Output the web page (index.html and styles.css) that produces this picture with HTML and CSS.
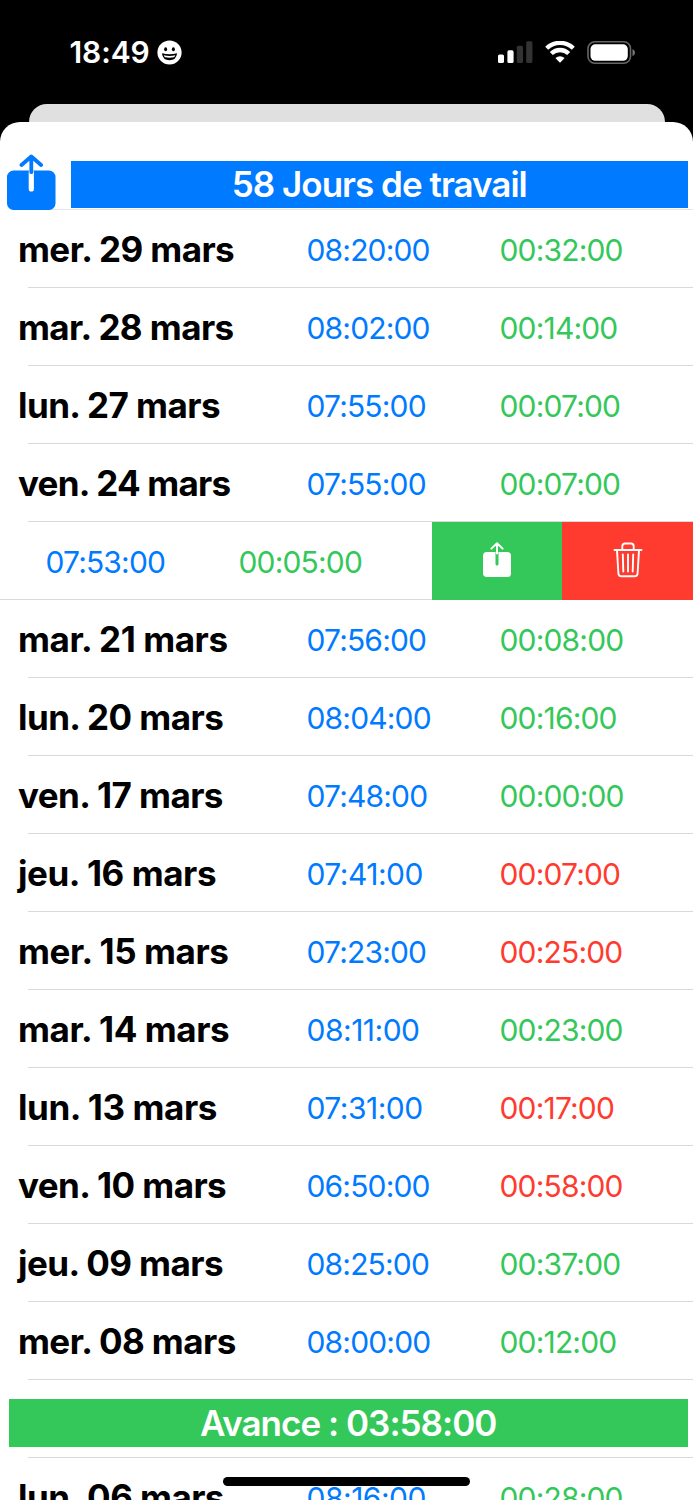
FILE: index.html
```html
<!DOCTYPE html>
<html lang="fr">
<head>
<meta charset="utf-8">
<title>Jours de travail</title>
<link rel="stylesheet" href="styles.css">
</head>
<body>
<div class="phone">
  <header class="status">
    <span class="clock">18:49</span>
    <svg class="smiley" width="25" height="25" viewBox="0 0 25 25"><circle cx="12.5" cy="12.5" r="12.1" fill="#fff"/><ellipse cx="8.6" cy="9.3" rx="1.5" ry="2" fill="#000"/><ellipse cx="16.4" cy="9.3" rx="1.5" ry="2" fill="#000"/><path d="M4.9 13.3Q12.5 15.3 20.1 13.3Q19.200 20.300 12.500 20.300Q5.800 20.300 4.900 13.300Z" fill="#000"/><path d="M6.700 15.300Q12.500 16.600 18.300 15.300Q17.900 16.700 16.800 17.300Q12.500 18.200 8.200 17.300Q7.100 16.700 6.700 15.300Z" fill="#fff"/></svg>
    <div class="indicators">
      <svg width="35" height="23" viewBox="0 0 35 23"><g fill="#fff"><rect x="0" y="13.500" width="6" height="8.500" rx="1.600"/><rect x="9.400" y="9.300" width="6.200" height="12.700" rx="1.600"/></g><g fill="#333"><rect x="18.800" y="4.700" width="6.200" height="17.300" rx="1.600"/><rect x="28.200" y="0.200" width="6.200" height="21.800" rx="1.600"/></g></svg>
      <svg width="30" height="23" viewBox="0 0 30 23"><g fill="none" stroke="#fff" stroke-width="4.300"><path d="M1.700 7.200A19.200 19.200 0 0 1 28.300 7.200"/><path d="M6.300 12.600A12.300 12.300 0 0 1 23.700 12.600"/></g><path d="M10.400 17Q15 13.400 19.600 17L15.600 21.300Q15 21.900 14.400 21.300Z" fill="#fff"/></svg>
      <svg width="49" height="23" viewBox="0 0 49 23"><rect x="1" y="0.800" width="42.500" height="21.400" rx="6.800" fill="none" stroke="#666" stroke-width="1.600"/><rect x="3.500" y="3.300" width="37.300" height="16.500" rx="4.800" fill="#fff"/><path d="M45.500 8V15Q48 14 48 11.500Q48 9 45.500 8Z" fill="#777"/></svg>
    </div>
  </header>
  <div class="back-sheet"></div>
  <main class="sheet">
    <div class="heading">
      <svg class="share" width="49" height="57" viewBox="0 0 49 57"><rect x="0" y="16.500" width="48.500" height="39.500" rx="6.500" fill="#007aff"/><path d="M24.300 18V35" stroke="#fff" stroke-width="5.200" stroke-linecap="round"/><path d="M24.300 18.200V3M14.500 11L24.300 2.500L34.100 11" fill="none" stroke="#007aff" stroke-width="3.800" stroke-linecap="round" stroke-linejoin="round"/></svg>
      <h1 class="title">58 Jours de travail</h1>
    </div>
    <div class="list">
      <div class="row"><b>mer. 29 mars</b><span class="worked">08:20:00</span><span class="plus">00:32:00</span></div>
      <div class="row"><b>mar. 28 mars</b><span class="worked">08:02:00</span><span class="plus">00:14:00</span></div>
      <div class="row"><b>lun. 27 mars</b><span class="worked">07:55:00</span><span class="plus">00:07:00</span></div>
      <div class="row"><b class="tight">ven. 24 mars</b><span class="worked">07:55:00</span><span class="plus">00:07:00</span></div>
      <div class="row swiped">
        <span class="worked">07:53:00</span><span class="plus">00:05:00</span>
        <div class="action send"><svg width="28" height="35" viewBox="0 0 28 35"><rect x="0" y="10" width="28" height="25" rx="3.800" fill="#fff"/><path d="M14 11V22" stroke="#34c759" stroke-width="3" stroke-linecap="round"/><path d="M14 11.500V1.500M8.400 6.600L14 1.200L19.600 6.600" fill="none" stroke="#fff" stroke-width="2" stroke-linecap="round" stroke-linejoin="round"/></svg></div>
        <div class="action delete"><svg width="30" height="36" viewBox="0 0 30 36"><g fill="none" stroke="#fff" stroke-width="1.900" stroke-linecap="round" stroke-linejoin="round"><path d="M1.500 8H28.500M9.300 8V4.300Q9.300 1.500 12 1.500H18Q20.700 1.500 20.700 4.300V8M4 8L5.400 31.500Q5.600 34.300 8.400 34.300H21.600Q24.400 34.300 24.600 31.500L26 8M9.800 12.500L10.300 29.500M15 12.500V29.500M20.200 12.500L19.700 29.500"/></g></svg></div>
      </div>
      <div class="row"><b class="wide">mar. 21 mars</b><span class="worked">07:56:00</span><span class="plus">00:08:00</span></div>
      <div class="row"><b>lun. 20 mars</b><span class="worked">08:04:00</span><span class="plus">00:16:00</span></div>
      <div class="row"><b>ven. 17 mars</b><span class="worked">07:48:00</span><span class="plus">00:00:00</span></div>
      <div class="row"><b class="wide">jeu. 16 mars</b><span class="worked loose">07:41:00</span><span class="minus">00:07:00</span></div>
      <div class="row"><b class="wide">mer. 15 mars</b><span class="worked">07:23:00</span><span class="minus">00:25:00</span></div>
      <div class="row"><b class="wide">mar. 14 mars</b><span class="worked loose">08:11:00</span><span class="plus">00:23:00</span></div>
      <div class="row"><b class="wide">lun. 13 mars</b><span class="worked loose">07:31:00</span><span class="minus">00:17:00</span></div>
      <div class="row"><b>ven. 10 mars</b><span class="worked">06:50:00</span><span class="minus">00:58:00</span></div>
      <div class="row"><b>jeu. 09 mars</b><span class="worked">08:25:00</span><span class="plus">00:37:00</span></div>
      <div class="row"><b>mer. 08 mars</b><span class="worked">08:00:00</span><span class="plus">00:12:00</span></div>
      <div class="row summary"><strong class="balance">Avance : 03:58:00</strong></div>
      <div class="row"><b>lun. 06 mars</b><span class="worked loose">08:16:00</span><span class="plus">00:28:00</span></div>
    </div>
  </main>
  <div class="home-bar"></div>
</div>
</body>
</html>
```
FILE: styles.css
```css
* { box-sizing: border-box; }
body { margin: 0; background: #000; font-family: Inter, "Liberation Sans", sans-serif; }
.phone { position: relative; width: 693px; height: 1500px; overflow: hidden; background: #000; display: flex; flex-direction: column; }
svg { display: block; flex: none; }

.status { height: 104px; flex: none; display: flex; align-items: center; padding: 0 57.500px 0 69.500px; }
.clock { color: #fff; font-size: 30px; font-weight: 600; width: 87px; letter-spacing: -0.1px; }
.indicators { margin-left: auto; display: flex; gap: 12px; align-items: center; }
.back-sheet { height: 18px; flex: none; margin: 0 28.500px; background: #e0e0e0; border-radius: 18px 18px 0 0; }

.sheet { flex: 1; min-height: 0; overflow: hidden; background: #fff; border-radius: 20px 20px 0 0; padding-top: 32px; }
.heading { height: 56px; display: flex; align-items: flex-end; gap: 15px; padding: 0 5.500px 0 7px; background: linear-gradient(#e6e6e6, #e6e6e6) 50px 100% / 100% 1px no-repeat; }
.share { margin-bottom: -1px; }
.title { flex: 1; margin: 0 0 2px; height: 47.500px; background: #007aff; color: #fff; font-size: 35px; line-height: 47.500px; font-weight: 600; text-align: center; letter-spacing: -0.98px; }

.row { height: 78px; display: grid; grid-template-columns: 289px 193px 1fr; align-items: center; padding-left: 18px; background: linear-gradient(#d9d9db, #d9d9db) 28px 100% / 100% 1px no-repeat; font-size: 30px; white-space: nowrap; }
.row b { font-size: 35px; font-weight: 700; letter-spacing: -0.57px; }
.row .tight { letter-spacing: -0.75px; }
.row .wide { letter-spacing: -0.43px; }
.worked, .plus, .minus { letter-spacing: -0.83px; padding-top: 1px; position: relative; left: -0.500px; }
.row .loose { letter-spacing: -0.5px; }
.worked { color: #007aff; }
.plus { color: #34c759; }
.minus { color: #ff3b30; }

.swiped { grid-template-columns: 193px 193px 130px 131px; padding-left: 46px; background-position: 0 100%; }
.action { height: 78px; display: grid; place-items: center; padding-bottom: 3px; }
.send { background: #34c759; }
.delete { background: #ff3b30; }

.summary { display: block; padding: 19px 5.500px 0 9px; }
.balance { display: block; height: 48px; line-height: 49px; background: #34c759; color: #fff; font-size: 35px; font-weight: 600; text-align: center; letter-spacing: -0.98px; }

.home-bar { position: absolute; left: 223px; top: 1477px; width: 247px; height: 9px; border-radius: 5px; background: #000; }
```
